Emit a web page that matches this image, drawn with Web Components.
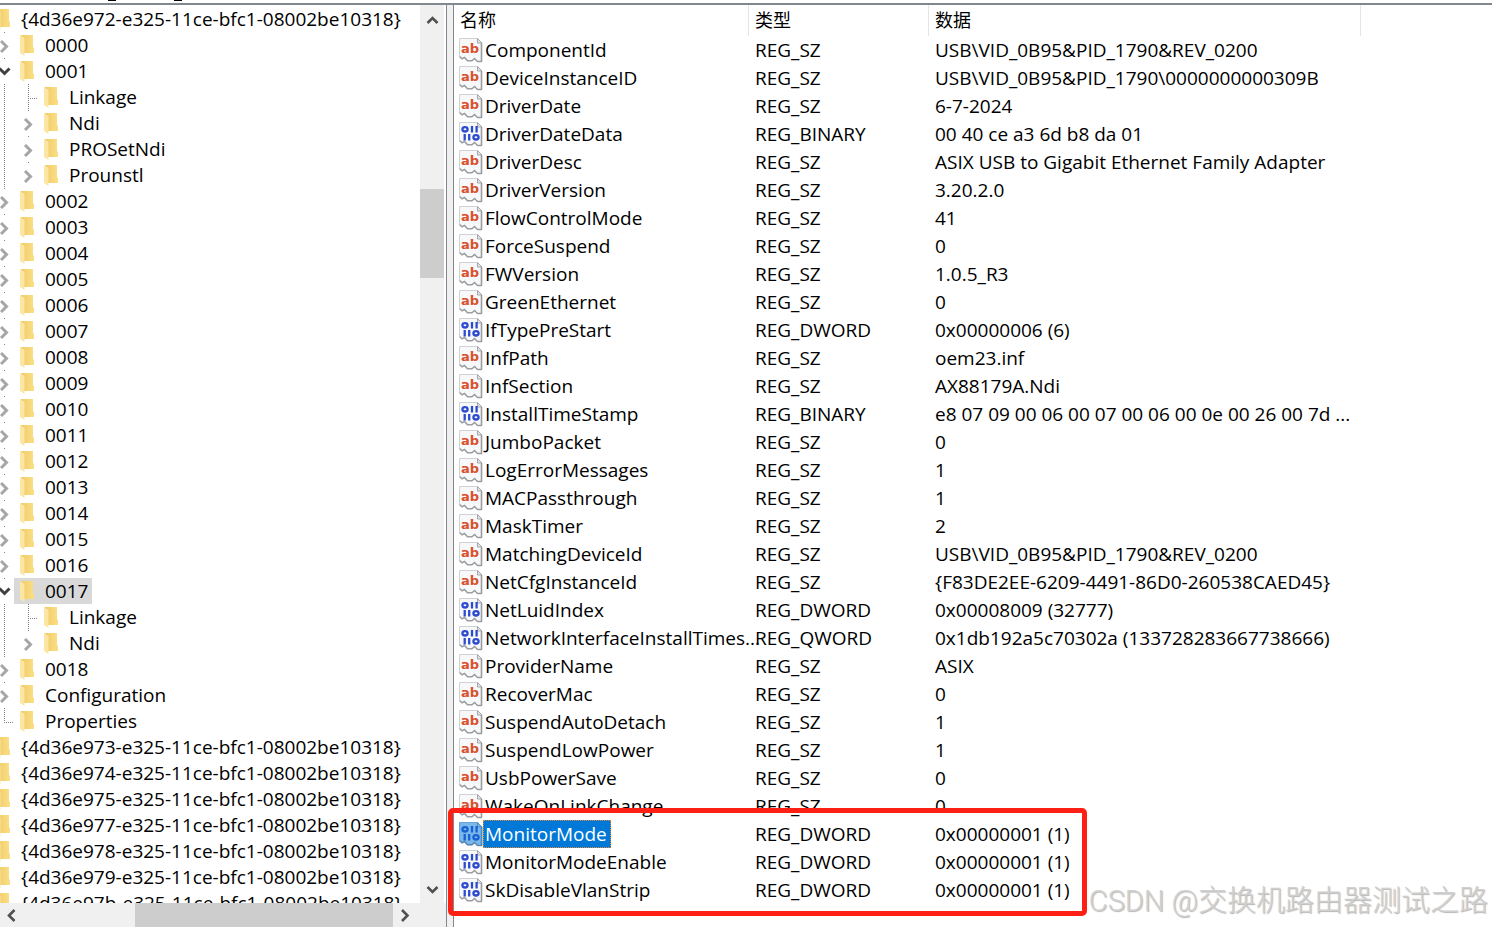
<!DOCTYPE html>
<html lang="zh-CN">
<head>
<meta charset="utf-8">
<title>注册表编辑器</title>
<style>
  body {
    margin: 0;
    height: 100vh;
    overflow: hidden;
    background: #fff;
    color: #000;
    font-family: "Open Sans", "Noto Sans CJK SC", sans-serif;
    font-size: 19px;
  }
</style>
</head>
<body>
<registry-editor></registry-editor>

<script>
const CLASS_TAIL = "-e325-11ce-bfc1-08002be10318}";

// level, label, state
const TREE = [
  [0, "{4d36e972" + CLASS_TAIL, "open"],
  [1, "0000", "closed"],
  [1, "0001", "open"],
  [2, "Linkage", "leaf"],
  [2, "Ndi", "closed"],
  [2, "PROSetNdi", "closed"],
  [2, "Prounstl", "closed"],
  ...["0002", "0003", "0004", "0005", "0006", "0007", "0008", "0009", "0010",
    "0011", "0012", "0013", "0014", "0015", "0016"].map((name) => [1, name, "closed"]),
  [1, "0017", "open", true],
  [2, "Linkage", "leaf"],
  [2, "Ndi", "closed"],
  [1, "0018", "closed"],
  [1, "Configuration", "closed"],
  [1, "Properties", "last"],
  ...["3", "4", "5", "7", "8", "9", "b"].map((c) => [0, "{4d36e97" + c + CLASS_TAIL, "closed"]),
];

const VALUES = [
  ["ComponentId", "REG_SZ", "USB\\VID_0B95&PID_1790&REV_0200"],
  ["DeviceInstanceID", "REG_SZ", "USB\\VID_0B95&PID_1790\\0000000000309B"],
  ["DriverDate", "REG_SZ", "6-7-2024"],
  ["DriverDateData", "REG_BINARY", "00 40 ce a3 6d b8 da 01"],
  ["DriverDesc", "REG_SZ", "ASIX USB to Gigabit Ethernet Family Adapter"],
  ["DriverVersion", "REG_SZ", "3.20.2.0"],
  ["FlowControlMode", "REG_SZ", "41"],
  ["ForceSuspend", "REG_SZ", "0"],
  ["FWVersion", "REG_SZ", "1.0.5_R3"],
  ["GreenEthernet", "REG_SZ", "0"],
  ["IfTypePreStart", "REG_DWORD", "0x00000006 (6)"],
  ["InfPath", "REG_SZ", "oem23.inf"],
  ["InfSection", "REG_SZ", "AX88179A.Ndi"],
  ["InstallTimeStamp", "REG_BINARY", "e8 07 09 00 06 00 07 00 06 00 0e 00 26 00 7d ..."],
  ["JumboPacket", "REG_SZ", "0"],
  ["LogErrorMessages", "REG_SZ", "1"],
  ["MACPassthrough", "REG_SZ", "1"],
  ["MaskTimer", "REG_SZ", "2"],
  ["MatchingDeviceId", "REG_SZ", "USB\\VID_0B95&PID_1790&REV_0200"],
  ["NetCfgInstanceId", "REG_SZ", "{F83DE2EE-6209-4491-86D0-260538CAED45}"],
  ["NetLuidIndex", "REG_DWORD", "0x00008009 (32777)"],
  ["NetworkInterfaceInstallTimes...", "REG_QWORD", "0x1db192a5c70302a (133728283667738666)"],
  ["ProviderName", "REG_SZ", "ASIX"],
  ["RecoverMac", "REG_SZ", "0"],
  ["SuspendAutoDetach", "REG_SZ", "1"],
  ["SuspendLowPower", "REG_SZ", "1"],
  ["UsbPowerSave", "REG_SZ", "0"],
  ["WakeOnLinkChange", "REG_SZ", "0"],
  ["MonitorMode", "REG_DWORD", "0x00000001 (1)"],
  ["MonitorModeEnable", "REG_DWORD", "0x00000001 (1)"],
  ["SkDisableVlanStrip", "REG_DWORD", "0x00000001 (1)"],
];

const escapeHtml = (s) => s.replace(/&/g, "&amp;").replace(/</g, "&lt;");

class ValueIcon extends HTMLElement {
  constructor() {
    super();
    this.attachShadow({ mode: "open" });
  }

  connectedCallback() {
    const text = `<text x="2" y="17" font-family="DejaVu Sans, sans-serif" font-size="13" font-weight="700" fill="#d9512c">ab</text>`;
    const bits = `
      <g fill="none" stroke="#2c4bd0" stroke-width="2.3">
        <ellipse cx="6" cy="9.3" rx="2.6" ry="2.2"/>
        <path d="M13 6v6.6M17.6 6v6.6M5.7 14v6.6M10.2 14v6.6"/>
        <ellipse cx="17" cy="17.3" rx="2.6" ry="2.2"/>
      </g>`;
    this.shadowRoot.innerHTML = `
      <style>
        :host { display: block; width: 24px; height: 28px; }
        :host([selected]) .tint { fill: #0078d7; fill-opacity: 0.5; }
        svg { display: block; }
        .tint { fill: none; }
      </style>
      <svg width="24" height="28" viewBox="0 0 24 28" aria-hidden="true">
        <path d="M.5 2.5H18.5L23 7V25.5H18.5L15.5 22.5L13 24.5H8.5L5.5 21.5L3 22.5L.5 20.5Z" fill="#f7f8fa"/>
        <path d="M.5 20.5V2.5H18.5" fill="none" stroke="#cfd1d4"/>
        <path d="M18.5 2.5V7H23Z" fill="#e3e4e6" stroke="#a5a7aa"/>
        <path d="M22.5 7V25.5" fill="none" stroke="#9a9c9f" stroke-width="1.6"/>
        <path d="M.5 20.5L3 22.8L5.5 21.5L8.5 24.7H13L15.5 22.5L18.5 25.5H23" fill="none" stroke="#9a9c9f" stroke-width="1.5"/>
        ${this.getAttribute("kind") === "text" ? text : bits}
        <path class="tint" d="M0 2H18.5L23.5 7V26H18.5L15.5 23.5L13 25.5H8.5L5.5 22.5L3 23.5L0 21Z"/>
      </svg>
    `;
  }
}

class TreeNode extends HTMLElement {
  constructor() {
    super();
    this.attachShadow({ mode: "open" });
  }

  connectedCallback() {
    const level = Number(this.getAttribute("level"));
    const state = this.getAttribute("state");
    const guides = Array.from({ length: level }, (_, i) =>
      `<span class="guide ${level === 2 && i === 1 ? "dots" : ""}"></span>`).join("");
    const arrow = state === "open"
      ? `<path d="M7.5 10.5L12.5 15.5L17.5 10.5" stroke="#404040"/>`
      : `<path d="M9 9L14.5 14.5L9 20" stroke="#a6a6a6"/>`;
    const hasButton = state === "open" || state === "closed";

    this.shadowRoot.innerHTML = `
      <style>
        :host { display: flex; height: 26px; white-space: nowrap; }
        .guide { width: 24px; flex: none; }
        .dots, .branch::before {
          background: repeating-linear-gradient(#808080 0 1px, transparent 1px 2px) 12px 0 / 1px 100% no-repeat;
        }
        .branch { width: 22px; flex: none; display: grid; }
        .branch::before, .branch::after { content: ""; grid-area: 1 / 1; }
        .branch.leaf::before { height: 26px; }
        .branch.last::before { height: 14px; }
        .branch::after {
          height: 1px;
          margin: 14px 0 0 12px;
          background: repeating-linear-gradient(90deg, #808080 0 1px, transparent 1px 2px);
        }
        .branch.open::before, .branch.closed::before { height: 1px; }
        .branch.open::after, .branch.closed::after { display: none; }
        button {
          grid-area: 1 / 1;
          padding: 0;
          border: 0;
          background: none;
          height: 26px;
        }
        svg { display: block; flex: none; }
        button path { fill: none; stroke-width: 3; }
        .item { display: flex; }
        :host([selected]) .item { background: #d9d9d9; }
        .label { padding: 0 4px 0 5px; line-height: 26px; }
      </style>
      ${guides}
      <span class="branch ${state}">
        ${hasButton ? `<button type="button" aria-label="${state === "open" ? "折叠" : "展开"}"><svg width="22" height="26" viewBox="0 0 22 26">${arrow}</svg></button>` : ""}
      </span>
      <span class="item">
        <svg width="26" height="26" viewBox="0 0 26 26" aria-hidden="true">
          <defs>
            <linearGradient id="back" x1="0" x2="1">
              <stop offset="0" stop-color="#f0cb69"/>
              <stop offset="1" stop-color="#fbdf86"/>
            </linearGradient>
          </defs>
          <path d="M7 3H19V15L20 16V21H7Z" fill="url(#back)"/>
          <path d="M6 3L10.5 6V24L6 21Z" fill="#fde6a3"/>
        </svg>
        <span class="label"><slot></slot></span>
      </span>
    `;
  }
}

class ScrollBar extends HTMLElement {
  constructor() {
    super();
    this.attachShadow({ mode: "open" });
  }

  connectedCallback() {
    const vertical = this.getAttribute("direction") === "vertical";
    const [before, thumb, after] = this.getAttribute("parts").split(" ");
    const paths = vertical
      ? ["M7.5 18L12.5 13L17.5 18", "M7.5 8L12.5 13L17.5 8"]
      : ["M14.5 7L9 12.5L14.5 18", "M6 7L11.5 12.5L6 18"];
    this.shadowRoot.innerHTML = `
      <style>
        :host {
          display: flex;
          flex-direction: ${vertical ? "column" : "row"};
          background: #f0f0f0;
        }
        button { flex: none; padding: 0; border: 0; background: none; height: 24px; width: 24px; }
        svg { display: block; }
        path { fill: none; stroke: #505050; stroke-width: 2.6; }
        .thumb { background: #cdcdcd; }
      </style>
      <button type="button" aria-label="${vertical ? "向上" : "向左"}"><svg width="24" height="24"><path d="${paths[0]}"/></svg></button>
      <span style="flex: ${before} 0 0"></span>
      <span class="thumb" style="flex: ${thumb} 0 0"></span>
      <span style="flex: ${after} 0 0"></span>
      <button type="button" aria-label="${vertical ? "向下" : "向右"}"><svg width="24" height="24"><path d="${paths[1]}"/></svg></button>
    `;
  }
}

class KeyTree extends HTMLElement {
  constructor() {
    super();
    this.attachShadow({ mode: "open" });
    this.render();
  }

  render() {
    const nodes = TREE.map(([level, label, state, selected]) =>
      `<tree-node level="${level}" state="${state}" ${selected ? "selected" : ""}>${label}</tree-node>`).join("");
    this.shadowRoot.innerHTML = `
      <style>
        :host {
          display: grid;
          grid-template: minmax(0, 1fr) 24px / minmax(0, 1fr) 24px;
          padding-right: 2px;
        }
        .view { overflow: hidden; padding-top: 1px; }
        /* the tree is scrolled a little to the right */
        .nodes { margin-left: -32px; }
        .corner { background: #f0f0f0; margin-right: -2px; }
      </style>
      <div class="view"><div class="nodes">${nodes}</div></div>
      <scroll-bar direction="vertical" parts="160 89 601"></scroll-bar>
      <scroll-bar direction="horizontal" parts="111 258 3"></scroll-bar>
      <div class="corner"></div>
    `;
  }
}

class ValueList extends HTMLElement {
  constructor() {
    super();
    this.attachShadow({ mode: "open" });
    this.render();
  }

  render() {
    const rows = VALUES.map(([name, type, data]) => {
      const selected = name === "MonitorMode" ? "selected" : "";
      const kind = type === "REG_SZ" ? "text" : "binary";
      return `
        <tr>
          <td><div class="name"><value-icon kind="${kind}" ${selected}></value-icon><span class="label ${selected}">${name}</span></div></td>
          <td>${type}</td>
          <td>${escapeHtml(data)}</td>
          <td></td>
        </tr>`;
    }).join("");
    this.shadowRoot.innerHTML = `
      <style>
        :host { display: block; overflow: hidden; }
        table { width: 100%; table-layout: fixed; border-collapse: separate; border-spacing: 0; }
        .c-name { width: 295px; }
        .c-type { width: 180px; }
        .c-data { width: 432px; }
        th {
          box-sizing: border-box;
          height: 31px;
          padding: 0 6px;
          border-right: 1px solid #e5e5e5;
          text-align: left;
          font-size: 18px;
          font-weight: 400;
          line-height: 31px;
        }
        th:last-child { border: 0; }
        td { height: 28px; padding: 0 6px; line-height: 28px; white-space: nowrap; }
        td:first-child { padding: 0 0 0 5px; }
        .name { display: flex; }
        .label { padding: 0 4px 0 2px; }
        .label.selected { background: #0078d7; color: #fff; outline: 1px dotted #e08a35; outline-offset: -1px; }
      </style>
      <table>
        <colgroup><col class="c-name"><col class="c-type"><col class="c-data"><col></colgroup>
        <thead><tr><th>名称</th><th>类型</th><th>数据</th><th></th></tr></thead>
        <tbody>${rows}</tbody>
      </table>
    `;
  }
}

class RegistryEditor extends HTMLElement {
  constructor() {
    super();
    this.attachShadow({ mode: "open" });
    this.render();
  }

  render() {
    this.shadowRoot.innerHTML = `
      <style>
        :host { display: flex; flex-direction: column; height: 100%; position: relative; overflow: hidden; }
        /* only the underscores of the address line reach below the window edge */
        .address { display: flex; gap: 58px; height: 3px; padding-left: 108px; }
        .address i { width: 8px; height: 1px; background: #000; }
        .panes { flex: 1; min-height: 0; display: flex; border-top: 2px solid #828790; }
        key-tree { width: 446px; box-sizing: border-box; flex: none; }
        .splitter {
          width: 6px;
          flex: none;
          background: #f0f0f0;
          border: solid #828790;
          border-width: 0 1px;
        }
        value-list { flex: 1; min-width: 0; }
        .marker {
          position: absolute;
          left: 448px;
          top: 808px;
          width: 639px;
          height: 108px;
          box-sizing: border-box;
          border: 5px solid #ff2015;
          border-radius: 5px;
        }
        .watermark {
          position: absolute;
          right: 4px;
          bottom: 4px;
          font-family: Roboto, "Noto Sans CJK SC", sans-serif;
          font-size: 29px;
          font-weight: 300;
          line-height: 44px;
          color: #d0d0d0;
          text-shadow: 1px 1px 1px #b4b4b4;
          white-space: nowrap;
        }
      </style>
      <div class="address"><i></i><i></i></div>
      <div class="panes">
        <key-tree></key-tree>
        <div class="splitter"></div>
        <value-list></value-list>
      </div>
      <div class="marker"></div>
      <div class="watermark">CSDN @交换机路由器测试之路</div>
    `;
  }
}

customElements.define("value-icon", ValueIcon);
customElements.define("tree-node", TreeNode);
customElements.define("scroll-bar", ScrollBar);
customElements.define("key-tree", KeyTree);
customElements.define("value-list", ValueList);
customElements.define("registry-editor", RegistryEditor);
</script>
</body>
</html>
